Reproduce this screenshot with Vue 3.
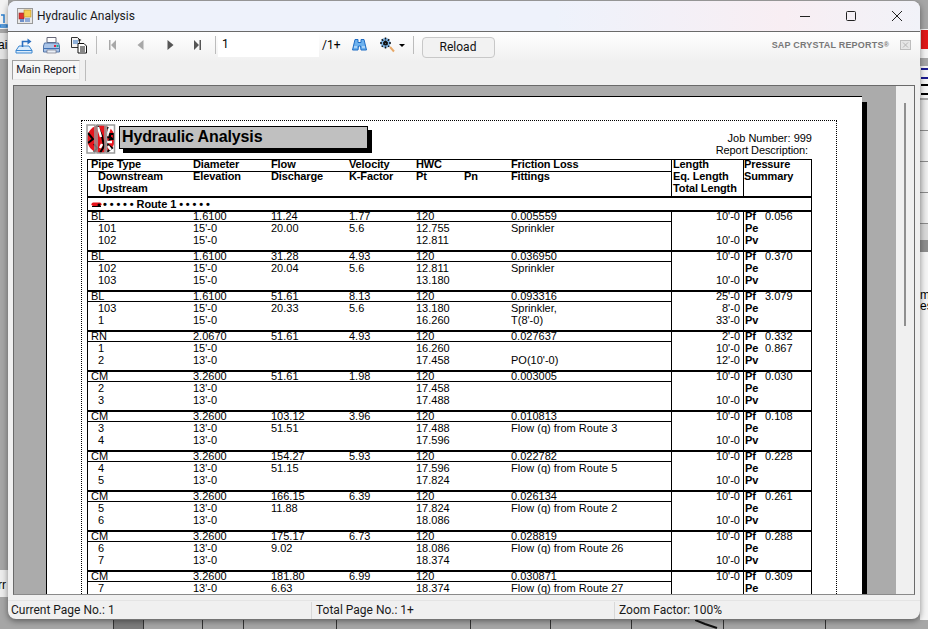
<template>
  <div class="desk">
    <!-- bits of the app behind the dialog -->
    <div class="behind left-top">
      <svg width="8" height="16" viewBox="0 0 8 16"><path d="M0 13h7v2H0zM1 3h3v8" fill="none" stroke="#2a7fd0" stroke-width="1.500" /></svg>
    </div>
    <div class="behind left-band"><span>ai</span></div>
    <div class="behind left-low"><span>rr</span></div>
    <div class="behind right-top"><span class="red"></span></div>
    <div class="behind right-glyphs"><span class="blue"></span><span class="dark"></span></div>
    <div class="behind right-cells"><i></i><i></i><i></i><i></i></div>
    <div class="behind right-band"></div>
    <div class="behind right-sheet"><span class="em">m</span><span class="es">es</span></div>
    <div class="behind foot">
      <b class="foot-dark"></b>
      <i v-for="x in footLines" :key="x" :style="{ left: x + 'px' }"></i>
      <svg class="foot-mark" width="30" height="9" viewBox="0 0 30 9"><path d="M0 0l10 4 12 4" stroke="#111" stroke-width="2" fill="none" /></svg>
    </div>

    <div class="window">
      <div class="titlebar">
        <svg class="app-icon" width="16" height="16" viewBox="0 0 16 16">
          <rect x="0.5" y="0.5" width="15" height="15" fill="#e8e8e8" stroke="#999" />
          <rect x="2" y="5" width="5" height="6" fill="#d33" stroke="#922" stroke-width="0.6" />
          <rect x="7" y="2" width="7" height="7" fill="#f6cf55" stroke="#b98b20" stroke-width="0.6" />
          <rect x="3" y="11" width="4" height="3" fill="#6d8fc9" />
          <rect x="8" y="10" width="5" height="4" fill="#8fa9d6" />
        </svg>
        <span class="title">Hydraulic Analysis</span>
        <div class="winbtns">
          <svg width="12" height="12" viewBox="0 0 12 12"><path d="M1 6.5h10" stroke="#222" fill="none" /></svg>
          <svg width="12" height="12" viewBox="0 0 12 12"><rect x="1.5" y="1.5" width="9" height="9" rx="1" stroke="#222" fill="none" /></svg>
          <svg width="12" height="12" viewBox="0 0 12 12"><path d="M1 1l10 10M11 1L1 11" stroke="#222" fill="none" /></svg>
        </div>
      </div>

      <div class="chrome">
        <div class="toolbar">
          <svg class="ic export" width="18" height="18" viewBox="0 0 18 18">
            <path d="M1 17v-2.500L4 10h10l3 4.500V17z" fill="#dcecfb" stroke="#3a86d0" />
            <path d="M1 14.500h16" stroke="#3a86d0" />
            <path d="M7.500 11V5.500h6" fill="none" stroke="#2a6fc0" stroke-width="1.600" />
            <path d="M12.500 2.500l4 3-4 3z" fill="#2a6fc0" />
          </svg>
          <svg class="ic print" width="18" height="18" viewBox="0 0 18 18">
            <path d="M5 1.500h9v5H5z" fill="#fff" stroke="#667" />
            <path d="M2.500 7h14l1 3v6h-16v-6z" fill="#a9c4e8" stroke="#5577a8" />
            <path d="M2 12.500h15" stroke="#3f70b5" />
            <rect x="5" y="14" width="9" height="3" fill="#e8eef6" stroke="#667" stroke-width="0.600" />
            <rect x="12" y="9" width="2" height="2" fill="#d24" />
            <rect x="14.500" y="9" width="2" height="2" fill="#2a9" />
          </svg>
          <svg class="ic copy" width="18" height="18" viewBox="0 0 18 18">
            <path d="M1.500 1.500h6l2 2v8h-8z" fill="#f4f4f4" stroke="#333" />
            <path d="M3 5h5M3 7h5" stroke="#2a6fc0" />
            <path d="M8 7.500h6l2.500 2.500v7H8z" fill="#fff" stroke="#111" />
            <path d="M10 11h5M10 13h5M10 15h5" stroke="#111" />
            <path d="M8.500 2.500l3 1.500-3 1.500z" fill="#111" />
          </svg>
          <span class="sep first"></span>
          <svg class="ic nav n1" width="8" height="10" viewBox="0 0 8 10"><path d="M1 0h1.500v10H1zM8 0v10L3 5z" fill="#a8a8a8" /></svg>
          <svg class="ic nav n2" width="7" height="10" viewBox="0 0 7 10"><path d="M6.500 0v10L0.500 5z" fill="#a8a8a8" /></svg>
          <svg class="ic nav n3" width="7" height="10" viewBox="0 0 7 10"><path d="M0.500 0v10l6-5z" fill="#555" /></svg>
          <svg class="ic nav n4" width="8" height="10" viewBox="0 0 8 10"><path d="M0 0v10l5-5zM5.500 0H7v10H5.500z" fill="#555" /></svg>
          <span class="sep second"></span>
          <div class="page-input">1</div>
          <span class="page-total">/1+</span>
          <svg class="ic bino" width="15" height="12" viewBox="0 0 15 12">
            <path d="M3 0.500h3v3h3v-3h3l2.500 10.500h-5.500l-0.500-4h-2l-0.500 4H0.500z" fill="#6cb1ee" stroke="#1f6cc4" />
            <path d="M2 8h3M10 8h3" stroke="#e4f2ff" />
          </svg>
          <svg class="ic zoomer" width="16" height="16" viewBox="0 0 16 16">
            <path d="M11 10l4 4.500" stroke="#e7a868" stroke-width="2" />
            <circle cx="6.500" cy="6" r="5" fill="#7fb6e8" />
            <path d="M6.500 0.500v11M1 6h11M2.800 2.300l7.400 7.400M10.200 2.300l-7.400 7.400" stroke="#111" stroke-width="1.500" stroke-dasharray="2 1" />
          </svg>
          <span class="caret"></span>
          <span class="sep third"></span>
          <button class="reload">Reload</button>
          <span class="brand">SAP CRYSTAL REPORTS<sup>®</sup></span>
          <svg class="ic closer" width="11" height="10" viewBox="0 0 11 10">
            <rect x="0.500" y="0.500" width="10" height="9" fill="#e6e6e6" stroke="#bdbdbd" />
            <path d="M3 2.500l5 5M8 2.500l-5 5" stroke="#b5b5b5" />
          </svg>
        </div>
        <div class="tabs">
          <div class="tab">Main Report</div>
          <span class="tab-sep"></span>
        </div>
      </div>

      <div class="viewer">
        <div class="pane">
          <div class="page">
            <div class="sheet">
              <div class="report-head">
                <svg class="logo" width="30" height="30" viewBox="0 0 30 30">
                  <circle cx="15" cy="15" r="14" fill="#e8141c" />
                  <path d="M2 9l5 6-5 4M11 1l5 11 2 10-4 7M20 4h3l-2 9 4 1-4 6 5 4-5 4M8 20l3 4-3 4M24 10h4v5h-4z" fill="none" stroke="#000" stroke-width="2" />
                  <path d="M12 3l3 10M24 3l-3 9M21 18h5M14 24l2-4M22 22l3 4" fill="none" stroke="#fff" stroke-width="2.400" />
                  <g fill="none" stroke="#9a9a9a" stroke-width="1.500">
                    <rect x="1" y="1" width="8" height="28" />
                    <rect x="11" y="1" width="8" height="28" />
                    <rect x="20.500" y="1" width="8" height="28" />
                  </g>
                </svg>
                <div class="banner">Hydraulic Analysis</div>
                <div class="job">
                  <div>Job Number: 999</div>
                  <div class="desc">Report Description:</div>
                </div>
              </div>

              <div class="table">
                <div class="group head">
                  <div class="main">
                    <div class="row one">
                      <span>Pipe Type</span><span>Diameter</span><span>Flow</span><span>Velocity</span><span>HWC</span><span></span><span>Friction Loss</span>
                    </div>
                    <div class="row two">
                      <span>Downstream</span><span>Elevation</span><span>Discharge</span><span>K-Factor</span><span>Pt</span><span>Pn</span><span>Fittings</span>
                    </div>
                    <div class="row two">
                      <span>Upstream</span><span></span><span></span><span></span><span></span><span></span><span></span>
                    </div>
                  </div>
                  <div class="len">
                    <div>Length</div>
                    <div>Eq. Length</div>
                    <div>Total Length</div>
                  </div>
                  <div class="press">
                    <div>Pressure</div>
                    <div>Summary</div>
                  </div>
                </div>

                <div class="route">
                  <svg width="11" height="5" viewBox="0 0 11 5">
                    <rect x="0.500" y="0.500" width="10" height="3.500" rx="1.750" fill="#e5121a" />
                    <circle cx="8" cy="3" r="1.500" fill="#000" />
                    <path d="M1 4.500h9" stroke="#000" />
                  </svg>
                  <span>• • • • • Route 1 • • • • •</span>
                </div>

                <div v-for="(g, i) in groups" :key="i" class="group body">
                  <div class="main">
                    <div class="row one">
                      <span>{{ g.type }}</span><span>{{ g.dia }}</span><span>{{ g.flow }}</span><span>{{ g.vel }}</span><span>120</span><span></span><span>{{ g.fric }}</span>
                    </div>
                    <div class="row two">
                      <span>{{ g.from }}</span><span>{{ g.elev1 }}</span><span>{{ g.disc }}</span><span>{{ g.k }}</span><span>{{ g.pt1 }}</span><span></span><span>{{ g.fit1 }}</span>
                    </div>
                    <div v-if="g.to" class="row two">
                      <span>{{ g.to }}</span><span>{{ g.elev2 }}</span><span></span><span></span><span>{{ g.pt2 }}</span><span></span><span>{{ g.fit2 }}</span>
                    </div>
                  </div>
                  <div class="len">
                    <div>{{ g.len[0] }}</div>
                    <div>{{ g.len[1] }}</div>
                    <div v-if="g.to">{{ g.len[2] }}</div>
                  </div>
                  <div class="press">
                    <div><b>Pf</b><span>{{ g.pf }}</span></div>
                    <div><b>Pe</b><span>{{ g.pe }}</span></div>
                    <div v-if="g.to"><b>Pv</b></div>
                  </div>
                </div>
              </div>
            </div>
          </div>
        </div>
        <div class="scrollbar"><span class="thumb"></span></div>
      </div>

      <div class="status">
        <div class="cell c1">Current Page No.: 1</div>
        <div class="cell c2">Total Page No.: 1+</div>
        <div class="cell c3">Zoom Factor: 100%</div>
      </div>
    </div>
  </div>
</template>

<script setup>
const footLines = [113, 143, 202, 243, 336, 470, 550, 631, 723, 825]

const plain = ["10'-0", '', "10'-0"]

const row = (type, dia, flow, vel, fric, from, elev1, disc, k, pt1, fit1, to, elev2, pt2, fit2, len, pf, pe = '') => ({
  type, dia, flow, vel, fric, from, elev1, disc, k, pt1, fit1, to, elev2, pt2, fit2, len, pf, pe
})

const groups = [
  row('BL', '1.6100', '11.24', '1.77', '0.005559', '101', "15'-0", '20.00', '5.6', '12.755', 'Sprinkler', '102', "15'-0", '12.811', '', plain, '0.056'),
  row('BL', '1.6100', '31.28', '4.93', '0.036950', '102', "15'-0", '20.04', '5.6', '12.811', 'Sprinkler', '103', "15'-0", '13.180', '', plain, '0.370'),
  row('BL', '1.6100', '51.61', '8.13', '0.093316', '103', "15'-0", '20.33', '5.6', '13.180', 'Sprinkler,', '1', "15'-0", '16.260', "T(8'-0)", ["25'-0", "8'-0", "33'-0"], '3.079'),
  row('RN', '2.0670', '51.61', '4.93', '0.027637', '1', "15'-0", '', '', '16.260', '', '2', "13'-0", '17.458', "PO(10'-0)", ["2'-0", "10'-0", "12'-0"], '0.332', '0.867'),
  row('CM', '3.2600', '51.61', '1.98', '0.003005', '2', "13'-0", '', '', '17.458', '', '3', "13'-0", '17.488', '', plain, '0.030'),
  row('CM', '3.2600', '103.12', '3.96', '0.010813', '3', "13'-0", '51.51', '', '17.488', 'Flow (q) from Route 3', '4', "13'-0", '17.596', '', plain, '0.108'),
  row('CM', '3.2600', '154.27', '5.93', '0.022782', '4', "13'-0", '51.15', '', '17.596', 'Flow (q) from Route 5', '5', "13'-0", '17.824', '', plain, '0.228'),
  row('CM', '3.2600', '166.15', '6.39', '0.026134', '5', "13'-0", '11.88', '', '17.824', 'Flow (q) from Route 2', '6', "13'-0", '18.086', '', plain, '0.261'),
  row('CM', '3.2600', '175.17', '6.73', '0.028819', '6', "13'-0", '9.02', '', '18.086', 'Flow (q) from Route 26', '7', "13'-0", '18.374', '', plain, '0.288'),
  // cut off by the bottom of the viewer
  row('CM', '3.2600', '181.80', '6.99', '0.030871', '7', "13'-0", '6.63', '', '18.374', 'Flow (q) from Route 27', '', '', '', '', plain, '0.309')
]
</script>

<style>
html, body {
  margin: 0;
  background: #a6a6a6;
}
</style>

<style scoped>
.desk {
  position: relative;
  width: 928px;
  height: 629px;
  overflow: hidden;
  background: #a6a6a6;
  font-family: "Liberation Sans", Arial, sans-serif;
}

.behind {
  position: absolute;
  overflow: hidden;
}
.left-top {
  left: 0;
  top: 0;
  width: 8px;
  height: 29px;
  padding-top: 12px;
  box-sizing: border-box;
  background: #f2f2f2;
}
.left-band {
  left: 0;
  top: 33px;
  width: 8px;
  height: 26px;
  background: #e2e2e2;
  font-size: 12px;
  line-height: 24px;
}
.left-low {
  left: 0;
  top: 570px;
  width: 8px;
  height: 27px;
  background: #ececec;
  font-size: 12px;
  line-height: 30px;
}
.left-band span,
.left-low span {
  margin-left: -2px;
}
.right-top {
  left: 920px;
  top: 29px;
  width: 8px;
  height: 29px;
  background: #f4f4f4;
}
.red {
  position: absolute;
  left: 1px;
  top: 1px;
  width: 7px;
  height: 19px;
  background: #e01818;
}
.right-glyphs {
  left: 920px;
  top: 66px;
  width: 8px;
  height: 32px;
  background: #f6f6f6;
}
.blue,
.dark {
  position: absolute;
  left: 1px;
  width: 7px;
  height: 11px;
  border: solid #000;
  border-width: 2px 0;
  box-sizing: border-box;
}
.blue {
  top: 2px;
  border-color: #1a1a90;
}
.dark {
  top: 18px;
}
.right-cells {
  left: 920px;
  top: 100px;
  width: 8px;
  height: 140px;
  display: flex;
  flex-direction: column;
  background: #d8d8d8;
}
.right-cells i {
  display: block;
  height: 30px;
  border-bottom: 1px solid #8a8a8a;
  background: linear-gradient(90deg, #dcdcdc, #f0f0f0);
}
.right-band {
  left: 920px;
  top: 240px;
  width: 8px;
  height: 12px;
  background: #8e8e8e;
}
.right-sheet {
  left: 920px;
  top: 252px;
  width: 8px;
  height: 368px;
  background: #f4f4f4;
  font-size: 12px;
}
.em {
  position: absolute;
  left: 0;
  top: 36px;
  line-height: 14px;
}
.es {
  position: absolute;
  left: 0;
  top: 47px;
  line-height: 14px;
}
.foot {
  left: 0;
  top: 620px;
  width: 928px;
  height: 9px;
}
.foot-dark {
  position: absolute;
  left: 113px;
  width: 30px;
  height: 9px;
  background: #7c7c7c;
}
.foot i {
  position: absolute;
  top: 0;
  width: 1px;
  height: 9px;
  background: #333;
}
.foot-mark {
  position: absolute;
  left: 695px;
  top: 0;
}

.window {
  position: absolute;
  left: 8px;
  top: 1px;
  width: 912px;
  height: 618px;
  display: flex;
  flex-direction: column;
  background: #f0f0f0;
  border-radius: 8px;
  overflow: hidden;
  box-shadow: 0 2px 6px rgba(0, 0, 0, 0.45);
}

.titlebar {
  height: 30px;
  flex-shrink: 0;
  display: flex;
  align-items: center;
  padding-left: 9px;
  background: linear-gradient(90deg, #eef2fb 0%, #eef2fb 60%, #f8eef3 85%, #f1f2f8 100%);
  border-bottom: 1px solid #6a6a6a;
}
.app-icon {
  margin-right: 4px;
}
.title {
  font-family: Roboto, sans-serif;
  font-size: 12px;
  color: #1a1a1a;
}
.winbtns {
  margin-left: auto;
  display: flex;
  gap: 34px;
  padding-right: 17px;
}

.chrome {
  flex-shrink: 0;
  background: linear-gradient(#fff 0%, #f0f0f0 55%, #f0f0f0 100%);
}

.toolbar {
  height: 26px;
  display: flex;
  align-items: center;
  font-size: 12px;
}
.ic {
  flex-shrink: 0;
}
.export { margin-left: 7px; }
.print { margin-left: 9px; }
.copy { margin-left: 10px; }
.n1 { margin-left: 11px; }
.n2 { margin-left: 21px; }
.n3 { margin-left: 23px; }
.n4 { margin-left: 20px; }

.sep {
  width: 1px;
  height: 18px;
  background: #bcbcbc;
  flex-shrink: 0;
}
.sep.first { margin-left: 8px; }
.sep.second { margin-left: 13px; }
.sep.third { margin-left: 8px; }

.page-input {
  width: 101px;
  height: 24px;
  margin-left: 2px;
  padding-left: 4px;
  box-sizing: border-box;
  background: #fff;
  font-family: Roboto, sans-serif;
  font-size: 12px;
  line-height: 23px;
  align-self: flex-start;
  margin-top: 1px;
}
.page-total {
  margin-left: 3px;
  font-family: Roboto, sans-serif;
  font-size: 12px;
}
.bino { margin-left: 11px; }
.zoomer { margin-left: 12px; }
.caret {
  margin-left: 4px;
  border: 3px solid transparent;
  border-top: 3px solid #000;
  border-bottom: none;
}
.reload {
  margin: 4px 0 0 8px;
  width: 73px;
  height: 21px;
  padding: 0;
  background: #f2f2f2;
  border: 1px solid #c8c8c8;
  border-radius: 4px;
  font-family: Roboto, sans-serif;
  font-size: 12px;
  color: #111;
}
.brand {
  margin-left: auto;
  font-size: 9px;
  font-weight: 700;
  color: #777;
  letter-spacing: 0.2px;
}
.brand sup {
  font-size: 7px;
  line-height: 0;
  vertical-align: 1px;
}
.closer {
  margin: 0 9px 0 11px;
}

.tabs {
  height: 27px;
  display: flex;
  align-items: flex-start;
  padding: 2px 0 0 4px;
  box-sizing: border-box;
}
.tab {
  width: 68px;
  height: 20px;
  box-sizing: border-box;
  border: 1px solid #a0a0a0;
  border-right-color: #e8e8e8;
  border-bottom-color: #e8e8e8;
  background: #f6f6f6;
  font-family: Roboto, sans-serif;
  font-size: 11px;
  line-height: 18px;
  text-align: center;
  white-space: nowrap;
  color: #1a1a2a;
}
.tab-sep {
  width: 1px;
  height: 21px;
  margin-left: 5px;
  background: #bcbcbc;
}

.viewer {
  flex: 1;
  min-height: 0;
  margin: 0 5px;
  display: flex;
  border: 1px solid #6a6a6a;
  border-bottom-color: #8a8a8a;
  background: #ababab;
}
.pane {
  flex: 1;
  min-width: 0;
  overflow: hidden;
  padding: 10px 0 0 32px;
}
.scrollbar {
  width: 18px;
  flex-shrink: 0;
  background: #f0f0f0;
  position: relative;
}
.thumb {
  position: absolute;
  left: 8px;
  top: 17px;
  width: 2px;
  height: 223px;
  background: #8f8f8f;
}

.page {
  width: 816px;
  height: 600px;
  box-sizing: border-box;
  border: solid #000;
  border-width: 1px 0 0 1px;
  background: #fff;
  padding: 23px 25px 0 34px;
  box-shadow: 5px 6px 0 #000;
}
.sheet {
  border: 1px dotted #000;
  border-bottom: none;
  padding: 3px 0 0 5px;
  height: 600px;
  font-size: 11px;
  color: #000;
}

.report-head {
  height: 35px;
  display: flex;
  align-items: flex-start;
  width: 725px;
}
.logo {
  flex-shrink: 0;
  margin-left: -1px;
}
.banner {
  width: 249px;
  height: 23px;
  margin: 2px 0 0 3px;
  box-sizing: border-box;
  border: 1px solid #000;
  background: #c0c0c0;
  box-shadow: 4px 4px 0 #000;
  padding-left: 2px;
  font-size: 16px;
  font-weight: 700;
  line-height: 19px;
  letter-spacing: -0.12px;
}
.job {
  margin-left: auto;
  margin-top: 8px;
  text-align: right;
  font-size: 11px;
  line-height: 12px;
}
.desc {
  margin-right: 4px;
  letter-spacing: -0.1px;
}

.table {
  width: 725px;
  box-sizing: border-box;
  border: solid #000;
  border-width: 1px 1px 0;
}
.group {
  display: grid;
  grid-template-columns: 583px 72px 68px;
}
.group.body {
  height: 40px;
  box-sizing: border-box;
  border-top: 2px solid #000;
}
.group.head {
  height: 36px;
  box-sizing: border-box;
  font-weight: 700;
  letter-spacing: -0.12px;
}
.main .row {
  display: grid;
  grid-template-columns: 105px 78px 78px 67px 48px 47px 1fr;
  height: 12px;
  line-height: 8px;
  white-space: nowrap;
}
.main .row.one {
  box-sizing: border-box;
  height: 10px;
  line-height: 9px;
  border-bottom: 1px solid #000;
}
.head .main .row.one {
  height: 12px;
  line-height: 9px;
}
.main .row > span:first-child {
  padding-left: 10px;
}
.main .row.one > span:first-child {
  padding-left: 3px;
}
.body .main .row.two {
  height: 13px;
  line-height: 13px;
}
.body .main .row.two + .row.two {
  line-height: 11px;
}
.len {
  border-left: 1px solid #000;
  box-sizing: border-box;
}
.press {
  border-left: 1px solid #000;
  box-sizing: border-box;
}
.len > div,
.press > div {
  height: 12px;
  line-height: 8px;
}
.body .len > div,
.body .press > div {
  height: 13px;
  line-height: 13px;
}
.body .len > div:first-child,
.body .press > div:first-child {
  height: 10px;
  line-height: 9px;
}
.body .len > div:nth-child(3),
.body .press > div:nth-child(3) {
  line-height: 11px;
}
.body .len {
  text-align: right;
  padding-right: 3px;
}
.body .press {
  padding-left: 1px;
}
.head .len {
  padding-left: 1px;
}
.press b {
  display: inline-block;
  width: 20px;
}
.route {
  height: 14px;
  box-sizing: border-box;
  border-top: 2px solid #000;
  display: flex;
  align-items: center;
  gap: 1px;
  padding-left: 3px;
  font-weight: 700;
  line-height: 12px;
  letter-spacing: -0.1px;
  white-space: pre;
}

.status {
  height: 18px;
  margin-top: 5px;
  flex-shrink: 0;
  display: flex;
  align-items: center;
  border-top: 1px solid #e4e4e4;
  font-family: Roboto, sans-serif;
  font-size: 12px;
  color: #1a1a1a;
}
.cell {
  height: 17px;
  line-height: 17px;
  box-sizing: border-box;
  padding-left: 3px;
}
.c1 { width: 303px; }
.c2 { width: 303px; border-left: 1px solid #d8d8d8; padding-left: 4px; }
.c3 { width: 300px; border-left: 1px solid #d8d8d8; padding-left: 4px; }
</style>
